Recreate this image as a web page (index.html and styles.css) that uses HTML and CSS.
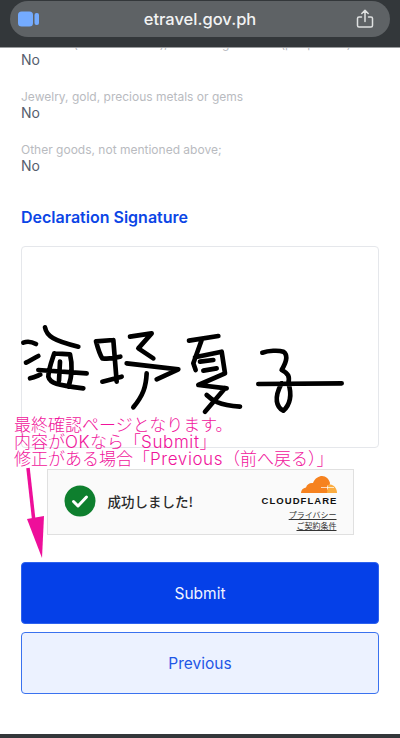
FILE: index.html
```html
<!DOCTYPE html>
<html lang="en">
<head>
<meta charset="utf-8">
<title>etravel.gov.ph</title>
<link rel="stylesheet" href="styles.css">
</head>
<body>
<div class="page">
  <header class="bar">
    <div class="pill">
      <svg class="cam" viewBox="0 0 22 16" width="22" height="16"><rect x="0" y="0.5" width="15" height="15" rx="3.5"/><rect x="16.5" y="2" width="4.5" height="12" rx="2"/></svg>
      <span class="url">etravel.gov.ph</span>
      <svg class="share" viewBox="0 0 18 20" width="18" height="20"><path d="M5.5 8H3a1.5 1.5 0 0 0-1.500 1.500v7A1.500 1.500 0 0 0 3 18h12a1.500 1.500 0 0 0 1.500-1.500v-7A1.500 1.500 0 0 0 15 8h-2.500M9 12.500V1.500M5.800 4.500 9 1.300l3.200 3.200"/></svg>
    </div>
  </header>
  <main class="content">
    <section class="row row-cut">
      <div class="label">Tobacco (over 2 cartons), exceeding the limit (per person)</div>
      <div class="value">No</div>
    </section>
    <section class="row">
      <div class="label">Jewelry, gold, precious metals or gems</div>
      <div class="value">No</div>
    </section>
    <section class="row">
      <div class="label">Other goods, not mentioned above;</div>
      <div class="value">No</div>
    </section>
    <h2 class="heading">Declaration Signature</h2>
    <div class="sigbox"></div>
    <div class="widget">
      <svg class="ok" viewBox="0 0 32 32" width="32" height="32"><circle cx="16" cy="16" r="15.500"/><path d="M9.500 16.500 14 21l8.500-9"/></svg>
      <span class="ok-text">成功しました!</span>
      <div class="cf">
        <svg class="cloud" viewBox="0 0 36 17" width="36" height="17"><path class="c1" d="M0 17C0 14 2 12 5 11.500 6 8 9 6.500 12 7 14 2 18 0 21 0c4 0 7 3 8 7l-2 10Z"/><path class="c2" d="M26 17h10c0-4-2.500-8-7-8.500L27 9Z"/><path class="spark" d="M20 11.500h13M26.500 9.500v4"/></svg>
        <div class="cf-name">CLOUDFLARE</div>
        <a class="cf-link">プライバシー</a>
        <a class="cf-link">ご契約条件</a>
      </div>
    </div>
    <button class="btn primary">Submit</button>
    <button class="btn secondary">Previous</button>
  </main>
  <div class="footer"></div>

  <svg class="ink" viewBox="0 0 1200 300" width="400" height="100">
    <g transform="translate(45 0)">
      <path d="M25 68C40 62 52 66 63 72M33 128C48 120 58 114 70 108M45 175C58 172 66 168 76 164M90 22C95 48 115 62 190 80"/>
      <path d="M118 100 165 103C172 130 172 170 160 200M118 100C108 130 100 150 100 170 105 190 125 195 205 205M70 150 215 160M135 125 132 182"/>
      <path d="M243 64 295 60M243 64C250 90 255 105 262 115 285 118 300 114 316 110M295 60 305 185M262 185 320 170"/>
      <path d="M345 50 410 40 370 85 415 115M335 130 490 148 425 178M395 160C393 200 385 225 355 262"/>
    </g>
    <g transform="translate(525 0)">
      <path d="M42 62 130 48M80 60 55 130 62 150M60 112 140 95 150 160 70 195 155 205M75 125 115 120M85 152 125 145M150 205 90 275M95 225C110 240 130 255 195 260"/>
      <path d="M262 98C280 92 310 90 325 95 340 105 335 125 320 150 340 160 345 170 340 190 352 225 345 255 325 272 305 262 295 235 320 190M250 192 500 190"/>
    </g>
  </svg>
  <p class="note">最終確認ページとなります。<br>内容が<span class="lat">OK</span>なら「<span class="lat">Submit</span>」<br>修正がある場合「<span class="lat">Previous</span>（前へ戻る）」</p>
  <svg class="arrow" viewBox="0 0 30 100" width="30" height="100"><path d="M3 2 9 56" /><polygon points="2,53 19,50 17,92"/></svg>
</div>
</body>
</html>
```
FILE: styles.css
```css
* { box-sizing: border-box; }
html, body { margin: 0; padding: 0; }
body { background: #fff; font-family: Inter, "Noto Sans", sans-serif; }
.page { position: relative; width: 400px; height: 738px; overflow: hidden; display: flex; flex-direction: column; }
.bar { flex: 0 0 48px; background: #33373a; border-bottom: 1px solid #9a9c9e; padding: 1px 10px 0; position: relative; z-index: 1; }
.pill { height: 36px; border-radius: 18px; background: #5e6265; display: flex; align-items: center; justify-content: space-between; padding: 0 16px 0 8px; position: relative; }
.cam { fill: #74abff; }
.url { position: absolute; left: 0; right: 0; text-align: center; color: #f2f3f3; font-size: 16.500px; font-weight: 500; }
.share { fill: none; stroke: #dfe1e1; stroke-width: 1.500; stroke-linecap: round; stroke-linejoin: round; }
.content { flex: 1; min-height: 0; padding: 0 21px; display: flex; flex-direction: column; }
.row { height: 53px; flex: none; }
.row-cut { margin-top: -12px; }
.label { font-size: 12px; line-height: 16px; color: #b9bbbf; white-space: nowrap; }
.value { font-size: 14px; line-height: 16px; color: #565e6c; }
.heading { margin: 12px 0 0; font-size: 16px; line-height: 20px; font-weight: 600; color: #0b45e6; }
.sigbox { flex: none; height: 202px; margin-top: 19px; border: 1px solid #e5e7eb; border-radius: 4px; }
.widget { flex: none; align-self: center; width: 307px; height: 66px; margin-top: 21px; background: #fafafa; border: 1px solid #e0e0e0; display: flex; align-items: center; padding: 0 16px; }
.ok { margin-top: -2px; }
.ok circle { fill: #0e7f2e; }
.ok path { fill: none; stroke: #fff; stroke-width: 3; stroke-linecap: round; stroke-linejoin: round; }
.ok-text { margin: -2px 0 0 12px; font-family: "Noto Sans CJK JP", sans-serif; font-size: 13.500px; font-weight: 500; color: #2b2b2b; }
.cf { margin-left: auto; padding-top: 3px; display: flex; flex-direction: column; align-items: flex-end; }
.cloud { display: block; margin-bottom: 2px; }
.c1 { fill: #f6821f; }
.c2 { fill: #fbad41; }
.spark { fill: none; stroke: #fff; stroke-width: 0.700; }
.cf-name { font-family: "Liberation Sans", sans-serif; font-size: 9.500px; line-height: 11px; font-weight: 700; letter-spacing: 1.050px; margin-right: -1px; color: #111; margin-bottom: 4px; }
.cf-link { font-family: "Noto Sans CJK JP", sans-serif; font-size: 8px; line-height: 10.500px; color: #333; text-decoration: underline; }
.btn { flex: none; display: block; width: 100%; height: 62px; border-radius: 4px; font-family: Inter, sans-serif; font-size: 15.500px; }
.primary { margin-top: 27px; background: #0540e8; border: 1px solid #2d62ee; color: #f1f4ff; }
.secondary { margin-top: 8px; background: #ecf2ff; border: 1.500px solid #3a72ef; color: #1f57e6; }
.footer { flex: 0 0 4px; background: #33373a; }
.ink { position: absolute; left: 0; top: 320px; fill: none; stroke: #000; stroke-width: 14; stroke-linecap: round; stroke-linejoin: round; }
.note { position: absolute; left: 14px; top: 417px; margin: 0; font-family: Inter, "Noto Sans CJK JP", sans-serif; font-size: 17px; font-weight: 300; line-height: 17px; color: #f0149b; white-space: nowrap; }
.lat { letter-spacing: 0.600px; }
.arrow { position: absolute; left: 25px; top: 466px; fill: #ee0f9a; stroke: none; }
.arrow path { fill: none; stroke: #ee0f9a; stroke-width: 3.500; }
```
